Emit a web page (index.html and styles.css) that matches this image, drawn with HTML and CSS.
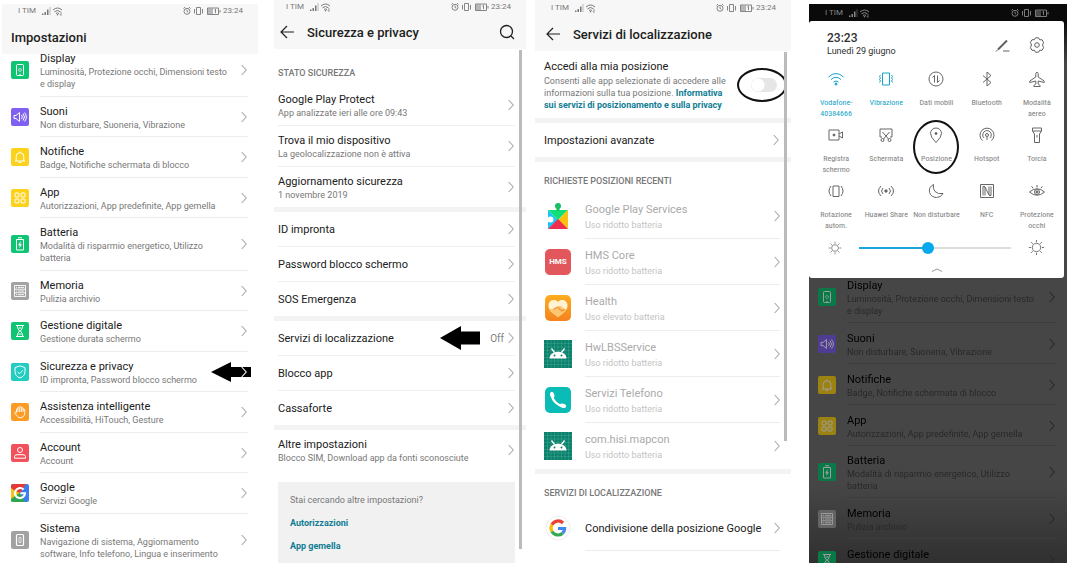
FILE: index.html
```html
<!DOCTYPE html>
<html lang="it">
<head>
<meta charset="utf-8">
<meta name="viewport" content="width=device-width, initial-scale=1">
<title>Impostazioni</title>
<link rel="stylesheet" href="styles.css">
</head>
<body>
<svg class="sprite" aria-hidden="true">
  <symbol id="chev" viewBox="0 0 6 12"><path d="M.7 1l4.5 5-4.5 5" fill="none" stroke="currentColor" stroke-width="1.1"/></symbol>
  <symbol id="back" viewBox="0 0 14 14"><path d="M14 7H1M7 1L1 7l6 6" fill="none" stroke="currentColor" stroke-width="1.2"/></symbol>
  <symbol id="net" viewBox="0 0 20 10"><path d="M0 9h1.5V7.500H0zM2.500 9H4V6H2.500zM5 9h1.500V3.500H5z" fill="currentColor"/><path d="M8 9V1" stroke="currentColor" stroke-width=".8" opacity=".6"/><path d="M11 4q4.500-4 9 0M12.500 5.800q3-2.600 6 0M14 7.500q1.500-1.200 3 0" fill="none" stroke="currentColor"/><circle cx="15.500" cy="8.700" r=".8" fill="currentColor"/><path d="M19 6v3.500M17.800 8l1.200 1.500" stroke="currentColor" stroke-width=".7"/></symbol>
  <symbol id="stat" viewBox="0 0 38 10"><g fill="none" stroke="currentColor" stroke-width=".9"><circle cx="4" cy="5.300" r="3"/><path d="M4 3.500v2l1.300.6M.5 2.500L2 1M7.500 2.500L6 1M13.500 1.500h4v7h-4zM11.500 3v4.500M19.500 3v4.500"/><path d="M24.500 2h11v6.500h-11zM37 4v2.500M31.500 4l1-.8v4"/></g><path d="M25 2.500h5V8h-5z" fill="currentColor" opacity=".5"/></symbol>

  <symbol id="i-display" viewBox="0 0 18 18"><rect width="18" height="18" rx="2" fill="#0fc573"/><g fill="none" stroke="#fff"><rect x="5.500" y="3.500" width="7" height="11" rx="1"/><path d="M7.300 9L9 7.200 10.700 9 9 10.700z" stroke-width=".8"/><path d="M8 13.200h2" stroke-width=".6"/></g></symbol>
  <symbol id="i-sound" viewBox="0 0 18 18"><rect width="18" height="18" rx="2" fill="#8060f0"/><path d="M3 7.500h2L8.500 4.500v9L5 10.500H3zM10.500 7q1.800 2 0 4M12 5.500q3 3.500 0 7M13.600 4.500q3.500 4.500 0 9" fill="none" stroke="#fff"/></symbol>
  <symbol id="i-bell" viewBox="0 0 18 18"><rect width="18" height="18" rx="2" fill="#fcd21c"/><path d="M4 13h10M5.200 13V8.500a3.800 3.800 0 0 1 7.600 0V13M7.700 14.500h2.600M9 3.500v1.200" fill="none" stroke="#fff"/></symbol>
  <symbol id="i-apps" viewBox="0 0 18 18"><rect width="18" height="18" rx="2" fill="#fcd21c"/><g fill="none" stroke="#fff"><rect x="4" y="4" width="4" height="4" rx="1"/><rect x="10" y="4" width="4" height="4" rx="1"/><rect x="4" y="10" width="4" height="4" rx="1"/><rect x="10" y="10" width="4" height="4" rx="1"/></g></symbol>
  <symbol id="i-batt" viewBox="0 0 18 18"><rect width="18" height="18" rx="2" fill="#0fc573"/><path d="M5.500 4.500h7v10.500h-7zM7 2.800h4" fill="none" stroke="#fff"/><path d="M9.800 6L7 10.200h1.700L8.300 13.300 11 9.200H9.300z" fill="#fff"/></symbol>
  <symbol id="i-mem" viewBox="0 0 18 18"><rect width="18" height="18" rx="2" fill="#a2a2a2"/><path d="M3.500 3.500h11v11h-11zM3.500 7.200h11M3.500 10.800h11M5 5.400h1M7 5.400h6M5 9h1M7 9h6M5 12.700h1M7 12.700h6" fill="none" stroke="#fff" stroke-width=".9"/></symbol>
  <symbol id="i-glass" viewBox="0 0 18 18"><rect width="18" height="18" rx="2" fill="#0fc573"/><path d="M5 3.500h8M5 14.500h8M6.300 3.500c0 3 1.200 4 2.300 5.500-1.100 1.500-2.300 2.500-2.300 5.500M11.700 3.500c0 3-1.200 4-2.300 5.500 1.100 1.500 2.300 2.500 2.300 5.500M7.500 13l1.500-1.500 1.500 1.500M7.500 6h3" fill="none" stroke="#fff"/></symbol>
  <symbol id="i-shield" viewBox="0 0 18 18"><rect width="18" height="18" rx="2" fill="#20cdc0"/><path d="M9 2.800l5 1.800v4.200c0 3-2 5-5 6.200-3-1.200-5-3.200-5-6.200V4.600zM6.500 8.800l2 2 3.300-3.500" fill="none" stroke="#fff"/></symbol>
  <symbol id="i-hand" viewBox="0 0 18 18"><rect width="18" height="18" rx="2" fill="#fb9c25"/><path d="M5.500 9.500V6q.8-1 1.500 0V4.500q.9-1 1.700 0V4q.9-1 1.700 0v1q.9-.8 1.700 0v1.500q.9-.8 1.600 0V11q-.5 3.500-4 3.800-2.500 0-3.700-2L3.500 9.800q.8-1.200 2-.3zM7 6v3M8.700 5v4M10.400 5v4M12.100 6v3" fill="none" stroke="#fff" stroke-width=".9"/></symbol>
  <symbol id="i-user" viewBox="0 0 18 18"><rect width="18" height="18" rx="2" fill="#f2505a"/><g fill="none" stroke="#fff"><circle cx="9" cy="6" r="2.500"/><path d="M3.500 14.200v-1.500q0-2 2.500-2h6q2.500 0 2.500 2v1.500z"/></g></symbol>
  <symbol id="i-google" viewBox="0 0 18 18"><rect width="18" height="18" rx="2" fill="#3d7df0"/><path d="M0 5V2q0-2 2-2h13L9 9z" fill="#e23b33"/><path d="M0 5l9 4-9 6z" fill="#fbbc05"/><path d="M0 14l9-5 5 9H2q-2 0-2-2z" fill="#2ea650"/><path d="M0 4l4 3v5l-4 3z" fill="#f6c21b"/><path d="M12.600 5.600A5 5 0 1 0 14 9.300H9.300" fill="none" stroke="#fff" stroke-width="2.100"/></symbol>
  <symbol id="i-sys" viewBox="0 0 18 18"><rect width="18" height="18" rx="2" fill="#a2a2a2"/><rect x="5.500" y="3.500" width="7" height="11" rx="1" fill="none" stroke="#fff" stroke-width="1.200"/><path d="M8 6.500h2v5H8z" fill="none" stroke="#fff" stroke-width=".7"/></symbol>

  <symbol id="a-play" viewBox="0 0 28 28"><path d="M4 8h20L14 18z" fill="#12df77"/><circle cx="14" cy="4" r="3" fill="#1abf63"/><path d="M12.500 5h3v4h-3z" fill="#1abf63"/><path d="M4 8l10 10L4 27z" fill="#19c5f5"/><path d="M24 8v19L14 18z" fill="#fdc211"/><path d="M4 27l10-10 10 10z" fill="#ee2f4f"/><circle cx="6.500" cy="17.500" r="3" fill="#fff"/><path d="M3.500 16h3v3h-3z" fill="#fff"/></symbol>
  <symbol id="a-health" viewBox="0 0 28 28"><linearGradient id="hg" x2="0" y2="1"><stop stop-color="#fdad1d"/><stop offset="1" stop-color="#f58220"/></linearGradient><rect x="1" y="1" width="26" height="26" rx="5" fill="url(#hg)"/><path d="M14 23C7 18 4.500 15.500 4.500 11.500c0-5.500 6.500-7 9.500-3.500 3-3.500 9.500-2 9.500 3.500 0 4-2.500 6.500-9.500 11.500z" fill="#fff3d4"/><path d="M5.500 15q5 .5 8-2.500 3-2 5 1 2 2.500 4 1.500-2 4-8.500 8Q8 19 5.500 15z" fill="#fdc673"/><path d="M10 15.500q3-4 5.500-.5t5 0" fill="none" stroke="#f19a3c" stroke-width="1.300"/></symbol>
  <symbol id="a-droid" viewBox="0 0 28 28"><path d="M0 0h28v28H0z" fill="#0b806b"/><path d="M3.500 0v28M7 0v28M10.500 0v28M14 0v28M17.500 0v28M21 0v28M24.500 0v28M0 3.500h28M0 7h28M0 10.500h28M0 14h28M0 17.500h28M0 21h28M0 24.500h28" stroke="#3ba08e" stroke-width=".6"/><path d="M5.500 18.500c0-9 17-9 17 0z" fill="#fff"/><path d="M7.500 8.500l3 4M20.500 8.500l-3 4" stroke="#fff" stroke-width="1.300"/><circle cx="10.500" cy="15.500" r="1" fill="#0b806b"/><circle cx="17.500" cy="15.500" r="1" fill="#0b806b"/></symbol>
  <symbol id="a-phone" viewBox="0 0 28 28"><rect x="1" y="1" width="26" height="26" rx="5" fill="#0bbcb6"/><path d="M7.500 9C9 15 13 19 19.500 20.500" fill="none" stroke="#fff" stroke-width="2.400"/><ellipse cx="8.200" cy="9" rx="2.100" ry="3.200" transform="rotate(-15 8.200 9)" fill="#fff"/><ellipse cx="19" cy="19.800" rx="3.200" ry="2.100" transform="rotate(15 19 19.800)" fill="#fff"/></symbol>
  <symbol id="a-google" viewBox="0 0 28 28"><circle cx="14" cy="14" r="12" fill="#fff" stroke="#eee"/><g fill="none" stroke-width="3.200"><path d="M19 9A7 7 0 0 0 7.900 10.700" stroke="#ea4335"/><path d="M7.900 10.700a7 7 0 0 0 0 6.800" stroke="#fbbc05"/><path d="M7.900 17.500A7 7 0 0 0 18.600 19.200" stroke="#34a853"/><path d="M18.600 19.200A7 7 0 0 0 20.600 14.500H14" stroke="#4285f4"/></g></symbol>

  <symbol id="q-wifi" viewBox="0 0 18 18"><path d="M1.500 7q7.500-7 15 0M4 9.500q5-4.500 10 0M6.500 12q2.500-2 5 0"/><circle cx="9" cy="14" r="1" fill="currentColor"/></symbol>
  <symbol id="q-vib" viewBox="0 0 18 18"><path d="M5.500 3h7v12h-7zM3.500 5L2.500 6.500l1 1.500-1 1.500 1 1.500-1 1.500M14.500 5l1 1.500-1 1.500 1 1.500-1 1.500 1 1.500"/></symbol>
  <symbol id="q-data" viewBox="0 0 18 18"><circle cx="9" cy="9" r="7"/><path d="M7.500 12.500v-7L5.500 7.500M10.500 5.500v7l2-2"/></symbol>
  <symbol id="q-bt" viewBox="0 0 18 18"><path d="M5 5.500l8 7-4 3.500V2l4 3.500-8 7"/></symbol>
  <symbol id="q-plane" viewBox="0 0 18 18"><path d="M7.800 7V3.500q1.200-3 2.400 0V7l6 4v1.500l-6-1.500v3l2 1.500v1H5.800v-1l2-1.500v-3l-6 1.500V11z"/></symbol>
  <symbol id="q-rec" viewBox="0 0 18 18"><path d="M2 4h10v10H2zM12 8l3.500-2v6L12 10"/><circle cx="7" cy="9" r="1" fill="currentColor"/></symbol>
  <symbol id="q-cut" viewBox="0 0 18 18"><path d="M5 11H3V3h12v8h-2M5.500 6l6 7M12.500 6l-6 7"/><circle cx="5.500" cy="14" r="1.500"/><circle cx="12.500" cy="14" r="1.500"/></symbol>
  <symbol id="q-pin" viewBox="0 0 18 18"><path d="M9 16.500Q3.500 11 3.500 7.500a5.500 5.500 0 0 1 11 0Q14.500 11 9 16.500z"/><circle cx="9" cy="7.500" r="1" fill="currentColor"/></symbol>
  <symbol id="q-hot" viewBox="0 0 18 18"><path d="M4.500 14.500a7 7 0 1 1 9 0M6 12a4.300 4.300 0 1 1 6 0"/><circle cx="9" cy="9" r="1.500"/><path d="M9 11v3"/></symbol>
  <symbol id="q-torch" viewBox="0 0 18 18"><path d="M4.500 2h9v3h-9zM4.500 5l2 3v8.500h5V8l2-3M9 9v2.500"/></symbol>
  <symbol id="q-rot" viewBox="0 0 18 18"><path d="M6 4h6v10.500H6zM4 4Q0 9 4 14M14 4q4 5 0 10"/></symbol>
  <symbol id="q-share" viewBox="0 0 18 18"><path d="M4 4Q-1 9 4 14M6 6Q3 9 6 12M14 4q5 5 0 10M12 6q3 3 0 6"/><circle cx="9" cy="9" r="1.200" fill="currentColor"/></symbol>
  <symbol id="q-moon" viewBox="0 0 18 18"><path d="M6.500 2.500Q1.500 5 2.500 10.500q2 5 7 5 4.500 0 6.500-4-5 1-8-2-2.500-3-1.500-7z"/></symbol>
  <symbol id="q-nfc" viewBox="0 0 18 18"><path d="M2.500 2.500h13v13h-13zM7 13.500V5l4 8V4.500M5 13.500v-9h2M13 4.500v9h-2"/></symbol>
  <symbol id="q-eye" viewBox="0 0 18 18"><path d="M1.500 10Q9 3.500 16.500 10 9 16.500 1.500 10zM9 5.500V3M5 6.300L3.700 4.300M13 6.300l1.300-2"/><circle cx="9" cy="10" r="2.500"/><circle cx="9" cy="10" r="1" fill="currentColor"/></symbol>
  <symbol id="q-sun" viewBox="0 0 18 18"><circle cx="9" cy="9" r="4.300"/><path d="M9 1v2.500M9 14.500V17M1 9h2.500M14.500 9H17M3.300 3.300l1.800 1.800M12.900 12.900l1.800 1.800M14.700 3.300l-1.800 1.800M5.100 12.900l-1.800 1.800"/></symbol>
  <symbol id="q-gear" viewBox="0 0 18 18"><path d="M7.500 1.800h3l1.200 2 2.300-.1 1.600 2.700L14.500 9l1.100 2.600-1.600 2.700-2.300-.1-1.200 2h-3l-1.200-2-2.300.1-1.600-2.700L3.500 9 2.400 6.400 4 3.700l2.300.1z"/><circle cx="9" cy="9" r="2.300"/></symbol>
  <symbol id="q-pen" viewBox="0 0 18 18"><path d="M5 13.500L14 4.500" stroke-width="2"/><path d="M3 15.500l2-2M10 15h6.500"/></symbol>
</svg>

<main class="board">
  <section class="phone phone-home">
    <header class="top">
      <div class="status"><span>I TIM</span><svg class="net"><use href="#net"/></svg><span class="grow"></span><svg class="stat"><use href="#stat"/></svg><time>23:24</time></div>
      <h1 class="bar home-title">Impostazioni</h1>
    </header>
    <nav class="list">
      <a class="row tall" href="#"><svg class="ico"><use href="#i-display"/></svg><span class="txt"><b>Display</b><small>Luminosità, Protezione occhi, Dimensioni testo e display</small></span><svg class="chev"><use href="#chev"/></svg></a>
      <a class="row" href="#"><svg class="ico"><use href="#i-sound"/></svg><span class="txt"><b>Suoni</b><small>Non disturbare, Suoneria, Vibrazione</small></span><svg class="chev"><use href="#chev"/></svg></a>
      <a class="row" href="#"><svg class="ico"><use href="#i-bell"/></svg><span class="txt"><b>Notifiche</b><small>Badge, Notifiche schermata di blocco</small></span><svg class="chev"><use href="#chev"/></svg></a>
      <a class="row" href="#"><svg class="ico"><use href="#i-apps"/></svg><span class="txt"><b>App</b><small>Autorizzazioni, App predefinite, App gemella</small></span><svg class="chev"><use href="#chev"/></svg></a>
      <a class="row tall" href="#"><svg class="ico"><use href="#i-batt"/></svg><span class="txt"><b>Batteria</b><small>Modalità di risparmio energetico, Utilizzo batteria</small></span><svg class="chev"><use href="#chev"/></svg></a>
      <a class="row" href="#"><svg class="ico"><use href="#i-mem"/></svg><span class="txt"><b>Memoria</b><small>Pulizia archivio</small></span><svg class="chev"><use href="#chev"/></svg></a>
      <a class="row" href="#"><svg class="ico"><use href="#i-glass"/></svg><span class="txt"><b>Gestione digitale</b><small>Gestione durata schermo</small></span><svg class="chev"><use href="#chev"/></svg></a>
      <a class="row marked" href="#"><svg class="ico"><use href="#i-shield"/></svg><span class="txt"><b>Sicurezza e privacy</b><small>ID impronta, Password blocco schermo</small></span><svg class="arrow arrow-home" viewBox="0 0 40 20"><path d="M0 10L20 0v5h20v10H20v5z"/></svg><svg class="chev"><use href="#chev"/></svg></a>
      <a class="row" href="#"><svg class="ico"><use href="#i-hand"/></svg><span class="txt"><b>Assistenza intelligente</b><small>Accessibilità, HiTouch, Gesture</small></span><svg class="chev"><use href="#chev"/></svg></a>
      <a class="row" href="#"><svg class="ico"><use href="#i-user"/></svg><span class="txt"><b>Account</b><small>Account</small></span><svg class="chev"><use href="#chev"/></svg></a>
      <a class="row" href="#"><svg class="ico"><use href="#i-google"/></svg><span class="txt"><b>Google</b><small>Servizi Google</small></span><svg class="chev"><use href="#chev"/></svg></a>
      <a class="row tall" href="#"><svg class="ico"><use href="#i-sys"/></svg><span class="txt"><b>Sistema</b><small>Navigazione di sistema, Aggiornamento software, Info telefono, Lingua e inserimento</small></span><svg class="chev"><use href="#chev"/></svg></a>
    </nav>
  </section>

  <section class="phone phone-security">
    <header class="top">
      <div class="status"><span>I TIM</span><svg class="net"><use href="#net"/></svg><span class="grow"></span><svg class="stat"><use href="#stat"/></svg><time>23:24</time></div>
      <div class="bar"><button class="plain" aria-label="Indietro"><svg class="back"><use href="#back"/></svg></button><h2>Sicurezza e privacy</h2><button class="plain" aria-label="Cerca"><svg class="search" viewBox="0 0 16 16"><circle cx="7.500" cy="7.500" r="6"/><path d="M12 12l3 3"/></svg></button></div>
    </header>
    <div class="scroll">
      <h3>STATO SICUREZZA</h3>
      <nav class="group">
        <a class="row" href="#"><span class="txt"><b>Google Play Protect</b><small>App analizzate ieri alle ore 09:43</small></span><svg class="chev"><use href="#chev"/></svg></a>
        <a class="row" href="#"><span class="txt"><b>Trova il mio dispositivo</b><small>La geolocalizzazione non è attiva</small></span><svg class="chev"><use href="#chev"/></svg></a>
        <a class="row" href="#"><span class="txt"><b>Aggiornamento sicurezza</b><small>1 novembre 2019</small></span><svg class="chev"><use href="#chev"/></svg></a>
      </nav>
      <nav class="group band">
        <a class="row single" href="#"><span class="txt"><b>ID impronta</b></span><svg class="chev"><use href="#chev"/></svg></a>
        <a class="row single" href="#"><span class="txt"><b>Password blocco schermo</b></span><svg class="chev"><use href="#chev"/></svg></a>
        <a class="row single" href="#"><span class="txt"><b>SOS Emergenza</b></span><svg class="chev"><use href="#chev"/></svg></a>
      </nav>
      <nav class="group band">
        <a class="row single" href="#"><span class="txt"><b>Servizi di localizzazione</b></span><svg class="arrow arrow-loc" viewBox="0 0 40 24"><path d="M0 12L21 0v5.500h19v13H21V24z"/></svg><span class="value">Off</span><svg class="chev"><use href="#chev"/></svg></a>
        <a class="row single" href="#"><span class="txt"><b>Blocco app</b></span><svg class="chev"><use href="#chev"/></svg></a>
        <a class="row single" href="#"><span class="txt"><b>Cassaforte</b></span><svg class="chev"><use href="#chev"/></svg></a>
      </nav>
      <nav class="group band">
        <a class="row" href="#"><span class="txt"><b>Altre impostazioni</b><small>Blocco SIM, Download app da fonti sconosciute</small></span><svg class="chev"><use href="#chev"/></svg></a>
      </nav>
      <aside class="hint"><p>Stai cercando altre impostazioni?</p><a href="#">Autorizzazioni</a><a href="#">App gemella</a></aside>
      <i class="thumb"></i>
    </div>
  </section>

  <section class="phone phone-location">
    <header class="top">
      <div class="status"><span>I TIM</span><svg class="net"><use href="#net"/></svg><span class="grow"></span><svg class="stat"><use href="#stat"/></svg><time>23:24</time></div>
      <div class="bar"><button class="plain" aria-label="Indietro"><svg class="back"><use href="#back"/></svg></button><h2>Servizi di localizzazione</h2></div>
    </header>
    <div class="scroll">
      <div class="access">
        <div class="access-text"><label for="loc">Accedi alla mia posizione</label><p>Consenti alle app selezionate di accedere alle informazioni sulla tua posizione. <a href="#">Informativa sui servizi di posizionamento e sulla privacy</a></p></div>
        <span class="ring-host"><input id="loc" class="switch" type="checkbox" role="switch"><i class="ring ring-switch"></i></span>
      </div>
      <nav class="group band"><a class="row single" href="#"><span class="txt"><b>Impostazioni avanzate</b></span><svg class="chev"><use href="#chev"/></svg></a></nav>
      <div class="band"><h3>RICHIESTE POSIZIONI RECENTI</h3></div>
      <nav class="apps">
        <a class="app" href="#"><svg><use href="#a-play"/></svg><span class="txt"><b>Google Play Services</b><small>Uso ridotto batteria</small></span><svg class="chev"><use href="#chev"/></svg></a>
        <a class="app" href="#"><span class="hms">HMS</span><span class="txt"><b>HMS Core</b><small>Uso ridotto batteria</small></span><svg class="chev"><use href="#chev"/></svg></a>
        <a class="app" href="#"><svg><use href="#a-health"/></svg><span class="txt"><b>Health</b><small>Uso elevato batteria</small></span><svg class="chev"><use href="#chev"/></svg></a>
        <a class="app" href="#"><svg><use href="#a-droid"/></svg><span class="txt"><b>HwLBSService</b><small>Uso ridotto batteria</small></span><svg class="chev"><use href="#chev"/></svg></a>
        <a class="app" href="#"><svg><use href="#a-phone"/></svg><span class="txt"><b>Servizi Telefono</b><small>Uso ridotto batteria</small></span><svg class="chev"><use href="#chev"/></svg></a>
        <a class="app" href="#"><svg><use href="#a-droid"/></svg><span class="txt"><b>com.hisi.mapcon</b><small>Uso ridotto batteria</small></span><svg class="chev"><use href="#chev"/></svg></a>
      </nav>
      <div class="band"><h3>SERVIZI DI LOCALIZZAZIONE</h3></div>
      <nav class="apps services"><a class="app" href="#"><svg><use href="#a-google"/></svg><span class="txt"><b>Condivisione della posizione Google</b></span><svg class="chev"><use href="#chev"/></svg></a></nav>
      <i class="thumb"></i>
    </div>
  </section>

  <section class="phone phone-shade">
    <div class="status"><span>I TIM</span><svg class="net"><use href="#net"/></svg><span class="grow"></span><svg class="stat"><use href="#stat"/></svg></div>
    <div class="shade">
      <div class="shade-head"><div><time class="clock">23:23</time><p>Lunedì 29 giugno</p></div><button class="plain" aria-label="Modifica"><svg class="q"><use href="#q-pen"/></svg></button><button class="plain" aria-label="Impostazioni"><svg class="q"><use href="#q-gear"/></svg></button></div>
      <div class="tiles">
        <button class="tile on"><svg class="q"><use href="#q-wifi"/></svg><span>Vodafone-<br>40384666</span></button>
        <button class="tile on"><svg class="q"><use href="#q-vib"/></svg><span>Vibrazione</span></button>
        <button class="tile"><svg class="q"><use href="#q-data"/></svg><span>Dati mobili</span></button>
        <button class="tile"><svg class="q"><use href="#q-bt"/></svg><span>Bluetooth</span></button>
        <button class="tile"><svg class="q"><use href="#q-plane"/></svg><span>Modalità<br>aereo</span></button>
        <button class="tile"><svg class="q"><use href="#q-rec"/></svg><span>Registra<br>schermo</span></button>
        <button class="tile"><svg class="q"><use href="#q-cut"/></svg><span>Schermata</span></button>
        <button class="tile"><svg class="q"><use href="#q-pin"/></svg><span>Posizione</span><i class="ring ring-pin"></i></button>
        <button class="tile"><svg class="q"><use href="#q-hot"/></svg><span>Hotspot</span></button>
        <button class="tile"><svg class="q"><use href="#q-torch"/></svg><span>Torcia</span></button>
        <button class="tile"><svg class="q"><use href="#q-rot"/></svg><span>Rotazione<br>autom.</span></button>
        <button class="tile"><svg class="q"><use href="#q-share"/></svg><span>Huawei Share</span></button>
        <button class="tile"><svg class="q"><use href="#q-moon"/></svg><span>Non disturbare</span></button>
        <button class="tile"><svg class="q"><use href="#q-nfc"/></svg><span>NFC</span></button>
        <button class="tile"><svg class="q"><use href="#q-eye"/></svg><span>Protezione<br>occhi</span></button>
      </div>
      <div class="bright"><svg class="sun-s"><use href="#q-sun"/></svg><input type="range" min="0" max="100" value="45" aria-label="Luminosità"><svg class="sun-l"><use href="#q-sun"/></svg></div>
      <svg class="fold" viewBox="0 0 12 4"><path d="M1 3.500L6 1l5 2.500"/></svg>
    </div>
    <nav class="list">
      <a class="row tall" href="#"><svg class="ico"><use href="#i-display"/></svg><span class="txt"><b>Display</b><small>Luminosità, Protezione occhi, Dimensioni testo e display</small></span><svg class="chev"><use href="#chev"/></svg></a>
      <a class="row" href="#"><svg class="ico"><use href="#i-sound"/></svg><span class="txt"><b>Suoni</b><small>Non disturbare, Suoneria, Vibrazione</small></span><svg class="chev"><use href="#chev"/></svg></a>
      <a class="row" href="#"><svg class="ico"><use href="#i-bell"/></svg><span class="txt"><b>Notifiche</b><small>Badge, Notifiche schermata di blocco</small></span><svg class="chev"><use href="#chev"/></svg></a>
      <a class="row" href="#"><svg class="ico"><use href="#i-apps"/></svg><span class="txt"><b>App</b><small>Autorizzazioni, App predefinite, App gemella</small></span><svg class="chev"><use href="#chev"/></svg></a>
      <a class="row tall" href="#"><svg class="ico"><use href="#i-batt"/></svg><span class="txt"><b>Batteria</b><small>Modalità di risparmio energetico, Utilizzo batteria</small></span><svg class="chev"><use href="#chev"/></svg></a>
      <a class="row" href="#"><svg class="ico"><use href="#i-mem"/></svg><span class="txt"><b>Memoria</b><small>Pulizia archivio</small></span><svg class="chev"><use href="#chev"/></svg></a>
      <a class="row" href="#"><svg class="ico"><use href="#i-glass"/></svg><span class="txt"><b>Gestione digitale</b><small>Gestione durata schermo</small></span><svg class="chev"><use href="#chev"/></svg></a>
    </nav>
  </section>
</main>
</body>
</html>
```
FILE: styles.css
```css
* { box-sizing: border-box; }
body { margin: 0; background: #fff; color: #202020; font-family: Roboto, "Liberation Sans", sans-serif; font-size: 9px; }
h1, h2, h3, p { margin: 0; }
a { color: inherit; text-decoration: none; }
b { font-weight: 400; }
svg { display: block; flex: none; }
.sprite { position: absolute; width: 0; height: 0; }
.plain { border: 0; background: none; padding: 0; color: inherit; }
.grow { flex: 1; }

.board { display: flex; height: 100vh; padding: 0 13px 0 2px; overflow: hidden; }
.phone { display: flex; flex-direction: column; min-width: 0; overflow: hidden; }
.phone-home { flex: 256; padding-top: 4px; margin-right: 16px; }
.phone-security { flex: 252; margin-right: 9px; }
.phone-location { flex: 256; margin-right: 18px; }
.phone-shade { flex: 258; margin-top: 4px; background: linear-gradient(#0a0a0a 0 18px, #464646 60px 480px, #303030); }

.top { position: relative; z-index: 1; background: #f7f7f7; }
.status { display: flex; align-items: center; height: 14px; padding: 0 15px 0 16px; color: #777; font-size: 8px; line-height: 14px; }
.net { width: 20px; height: 10px; margin-left: 6px; }
.stat { width: 38px; height: 10px; margin-right: 2px; }
.bar { display: flex; align-items: center; gap: 13px; height: 36px; padding: 2px 11px 0 6px; font-size: 13px; }
.bar h2 { flex: 1; font-size: 13px; font-weight: 500; white-space: nowrap; }
.home-title { padding-left: 9px; font-weight: 500; }
.back { width: 14px; height: 14px; }
.search { width: 16px; height: 16px; fill: none; stroke: currentColor; stroke-width: 1.3; }

.list { display: flex; flex: 1; flex-direction: column; margin: -10px 0 -3px; }
.row { position: relative; display: flex; align-items: center; flex: 1 0 40px; padding: 0 11px 0 9px; }
.tall { flex-basis: 52px; }
.ico { width: 18px; height: 18px; margin-right: 11px; }
.txt { flex: 1; display: flex; flex-direction: column; min-width: 0; padding: 2px 6px 0 0; }
.txt b { font-size: 11px; line-height: 14px; }
.txt small { color: #787878; font-size: 9px; line-height: 12px; }
.list .row::after { content: ""; position: absolute; left: 38px; right: 10px; bottom: 0; border-bottom: 1px solid #ececec; }
.chev { width: 6px; height: 12px; color: #aaa; margin-left: 4px; }
.arrow { position: absolute; fill: #000; }
.arrow-home { width: 40px; height: 20px; right: 7px; }
.marked .chev { position: relative; color: #fff; }
.arrow-loc { width: 40px; height: 24px; right: 35px; }

.phone-security .status { height: 13px; padding-left: 12px; }
.scroll { position: relative; flex: 1; min-height: 0; }
h3 { color: #787878; font-size: 9px; font-weight: 500; line-height: 12px; }
.phone-security h3 { padding: 18px 4px 6px; }
.group .row { min-height: 40px; margin: 0 11px 0 4px; padding: 0; }
.group .row + .row { border-top: 1px solid #efefef; min-height: 41px; }
.group .single { min-height: 34px; }
.group .single + .single { min-height: 35px; }
.group .chev { margin-right: 1px; }
.band { border-top: 5px solid #f3f3f3; }
.value { color: #808080; font-size: 10px; }
.hint { display: flex; flex-direction: column; gap: 11px; margin: 12px 11px 0 4px; padding: 12px; background: #f1f1f1; color: #787878; line-height: 12px; }
.hint a, .access a { color: #107d94; font-weight: 700; }
.thumb { position: absolute; right: 4px; top: 1px; width: 3px; height: 97%; background: #bbb; }

.phone-location .status { height: 15px; }
.phone-location .bar { padding-left: 11px; }
.access { display: flex; align-items: center; height: 67px; padding: 0 14px 0 9px; }
.access-text { flex: 1; padding-right: 16px; }
.access label { display: block; font-size: 11px; line-height: 15px; }
.access p { color: #787878; line-height: 12px; padding-top: 1px; }
.ring-host { position: relative; display: flex; }
.switch { appearance: none; width: 26px; height: 14px; margin: 0; border-radius: 7px; background: radial-gradient(circle at 7px 7px, #fff 0 6px, #e6e6e6 7px); }
.ring { position: absolute; border: 2px solid #111; border-radius: 50%; pointer-events: none; }
.ring-switch { width: 50px; height: 34px; left: -14px; top: -10px; }
.phone-location .group .row { margin-left: 9px; }
.phone-location h3 { padding: 13px 9px 6px; }
.app { display: flex; align-items: center; height: 46px; padding: 0 11px 0 9px; position: relative; }
.app > :first-child { width: 28px; height: 28px; margin-right: 13px; }
.app::after { content: ""; position: absolute; left: 50px; right: 11px; bottom: 0; border-bottom: 1px solid #ececec; }
.app .txt { gap: 2px; }
.app .txt b { color: #aaa; }
.app .txt small { color: #c4c4c4; }
.app .hms { background: #e1575b; border: 1px solid #fff; border-radius: 6px; color: #fff; font-size: 8px; font-weight: 700; line-height: 26px; text-align: center; }
.apps:not(.services) .app:last-child::after { display: none; }
.services .app .txt { padding-right: 0; }
.services .app .txt b { color: #202020; white-space: nowrap; }
.phone-location .thumb { height: 76%; }

.phone-shade .status { height: 17px; padding-right: 16px; color: #888; flex: none; }
.shade { position: relative; z-index: 1; flex: none; margin-right: 3px; padding: 10px 2px 6px; border-radius: 3px; background: #fff; color: #707070; }
.shade-head { display: flex; align-items: center; gap: 17px; padding: 0 16px; color: #606060; }
.shade-head > div { flex: 1; color: #303030; line-height: 13px; }
.clock { display: block; font-size: 12px; font-weight: 500; line-height: 14px; }
.q { width: 18px; height: 18px; fill: none; stroke: currentColor; }
.tiles { display: grid; grid-template-columns: repeat(5, 1fr); grid-auto-rows: 56px; margin: 12px 0 1px; }
.tile { position: relative; display: flex; flex-direction: column; align-items: center; gap: 9px; padding: 0; border: 0; background: none; color: #808080; font: 8px/11px "Roboto Condensed", "Liberation Sans Narrow", Roboto, sans-serif; white-space: nowrap; }
.tile .q { color: #666; }
.tile.on, .on .q { color: #14a3c7; }
.ring-pin { width: 46px; height: 54px; top: -6px; }
.bright { display: flex; align-items: center; justify-content: space-between; gap: 17px; padding: 0 17px; }
.bright input { flex: 1; min-width: 0; appearance: none; height: 12px; margin: 0; background: linear-gradient(90deg, #1aa6dc 45%, #ddd 45%) center / 100% 2px no-repeat; }
.bright input::-webkit-slider-thumb { appearance: none; width: 12px; height: 12px; border-radius: 50%; background: #08a9ec; }
.sun-s { width: 14px; height: 14px; fill: none; stroke: currentColor; }
.sun-l { width: 17px; height: 17px; fill: none; stroke: currentColor; }
.fold { width: 12px; height: 4px; margin: 12px auto 0; fill: none; stroke: #999; }
.phone-shade .list { flex: none; margin: -7px 1px 0 0; filter: brightness(.62); }
.phone-shade .row { flex-basis: 41px; color: #000; }
.phone-shade .tall { flex-basis: 52px; }
.phone-shade .txt small { color: #404040; }
.phone-shade .chev { color: #404040; }
.phone-shade .row::after { border-color: #606060; }
```
